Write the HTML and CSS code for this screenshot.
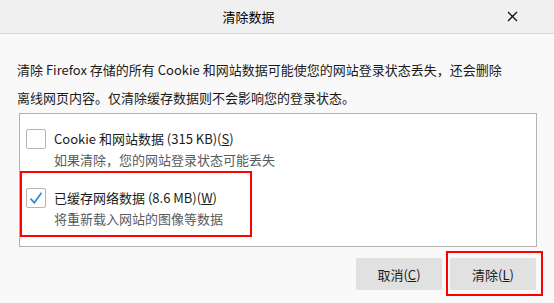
FILE: index.html
```html
<!DOCTYPE html>
<html lang="zh-CN">
  <head>
    <meta charset="UTF-8" />
    <meta name="viewport" content="width=device-width, initial-scale=1.0" />
    <title>清除数据</title>
    <link rel="stylesheet" href="styles.css">
  </head>
  <body>
    <div class="dialog">
      <div class="titlebar">
        <div class="title">清除数据</div>
        <div class="close">
          <svg width="11" height="11" viewBox="0 0 11 11">
            <path d="M1 1L10 10M10 1L1 10" stroke="#111" stroke-width="1.3" fill="none" />
          </svg>
        </div>
      </div>
      <p class="intro">清除 Firefox 存储的所有 Cookie 和网站数据可能使您的网站登录状态丢失，还会删除离线网页内容。仅清除缓存数据则不会影响您的登录状态。</p>
      <div class="options">
        <div class="item">
          <div class="row">
            <span class="check"></span>
            <span class="label">Cookie 和网站数据 (315 KB)(<u>S</u>)</span>
          </div>
          <div class="desc">如果清除，您的网站登录状态可能丢失</div>
        </div>
        <div class="item marked">
          <div class="row">
            <span class="check">
              <svg width="18" height="18" viewBox="0 0 18 18">
                <path d="M3.5 9.5L7.3 13.8L14.5 3.8" stroke="#2f8ddc" stroke-width="1.8" fill="none" />
              </svg>
            </span>
            <span class="label">已缓存网络数据 (8.6 MB)(<u>W</u>)</span>
          </div>
          <div class="desc">将重新载入网站的图像等数据</div>
        </div>
      </div>
      <div class="buttons">
        <button class="btn">取消(<u>C</u>)</button>
        <span class="mark">
          <button class="btn">清除(<u>L</u>)</button>
        </span>
      </div>
    </div>
  </body>
</html>
```

FILE: styles.css
```css
* {
  padding: 0;
  margin: 0;
  box-sizing: border-box;
}
html, body {
  width: 100%;
  height: 100%;
  overflow: hidden;
}
body {
  background: #f9f9f9;
  font-family: "Noto Sans CJK SC", "Noto Sans", sans-serif;
  font-size: 13px;
  color: #1a1a1a;
}
.titlebar {
  height: 34px;
  display: flex;
  align-items: center;
  background: #f0f0f0;
  border-bottom: 1px solid #d6d6d6;
}
.title {
  flex: 1;
  text-align: center;
  font-size: 13px;
  color: #000;
}
.close {
  width: 30px;
  margin-right: 27px;
  display: flex;
  justify-content: center;
  align-items: center;
}
.intro {
  margin: 22px 0 1px 17px;
  width: 492px;
  line-height: 28px;
  color: #1a1a1a;
}
.options {
  margin-left: 19px;
  width: 518px;
  height: 134px;
  background: #fff;
  border: 1px solid #b3b3b3;
  padding-bottom: 8px;
}
.item {
  padding: 15px 0 1px 6px;
}
.item.marked {
  width: 232px;
  border: 2px solid #ff0000;
  padding: 15px 0 6px 4px;
}
.row {
  display: flex;
  align-items: center;
  height: 20px;
}
.check {
  width: 20px;
  height: 20px;
  border: 1px solid #b5b5b5;
  border-radius: 2px;
  background: #fff;
  margin-right: 8px;
  display: flex;
  justify-content: center;
  align-items: center;
}
.label {
  line-height: 20px;
  color: #1a1a1a;
}
.desc {
  margin: 1px 0 0 28px;
  line-height: 20px;
  color: #5a5a5a;
}
.buttons {
  display: flex;
  justify-content: flex-end;
  align-items: flex-start;
  margin: 4px 11px 0 0;
}
.btn {
  width: 86px;
  height: 32px;
  border: none;
  border-radius: 2px;
  background: #e1e1e1;
  font-family: inherit;
  font-size: 13px;
  color: #1a1a1a;
}
.buttons > .btn {
  margin-top: 7px;
  margin-right: 4px;
}
.mark {
  display: flex;
  border: 2px solid #ff0000;
  padding: 5px 5px 4px 2px;
}
```
